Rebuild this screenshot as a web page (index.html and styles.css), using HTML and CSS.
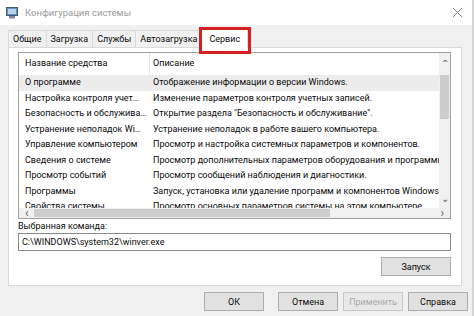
FILE: index.html
```html
<!DOCTYPE html>
<html lang="ru">
<head>
    <meta charset="UTF-8">
    <title>Конфигурация системы</title>
    <link rel="stylesheet" href="styles.css">
</head>
<body>
    <div class="window">
        <div class="titlebar">
            <svg class="appicon" width="12" height="12" viewBox="0 0 12 12">
                <rect x="0.5" y="0.5" width="11" height="8" fill="#6a8fb8" stroke="#3d5a80"/>
                <rect x="2" y="2" width="8" height="5" fill="#bcd3ec"/>
                <rect x="3" y="9" width="6" height="2.5" fill="#7d8794"/>
            </svg>
            <span class="title">Конфигурация системы</span>
            <svg class="close" width="11" height="11" viewBox="0 0 11 11">
                <path d="M1 1L10 10M10 1L1 10" stroke="#8a8a8a" stroke-width="1"/>
            </svg>
        </div>

        <div class="tabs">
            <div class="tab">Общие</div>
            <div class="tab">Загрузка</div>
            <div class="tab">Службы</div>
            <div class="tab">Автозагрузка</div>
            <div class="tab active">Сервис</div>
        </div>

        <div class="panel">
            <div class="listview">
                <div class="listbody">
                    <div class="lvrow header">
                        <div class="col1">Название средства</div>
                        <div class="col2">Описание</div>
                    </div>
                    <div class="lvrow selected">
                        <div class="col1">О программе</div>
                        <div class="col2">Отображение информации о версии Windows.</div>
                    </div>
                    <div class="lvrow">
                        <div class="col1">Настройка контроля учет…</div>
                        <div class="col2">Изменение параметров контроля учетных записей.</div>
                    </div>
                    <div class="lvrow">
                        <div class="col1">Безопасность и обслужива…</div>
                        <div class="col2">Открытие раздела "Безопасность и обслуживание".</div>
                    </div>
                    <div class="lvrow">
                        <div class="col1">Устранение неполадок Wi…</div>
                        <div class="col2">Устранение неполадок в работе вашего компьютера.</div>
                    </div>
                    <div class="lvrow">
                        <div class="col1">Управление компьютером</div>
                        <div class="col2">Просмотр и настройка системных параметров и компонентов.</div>
                    </div>
                    <div class="lvrow">
                        <div class="col1">Сведения о системе</div>
                        <div class="col2">Просмотр дополнительных параметров оборудования и программн</div>
                    </div>
                    <div class="lvrow">
                        <div class="col1">Просмотр событий</div>
                        <div class="col2">Просмотр сообщений наблюдения и диагностики.</div>
                    </div>
                    <div class="lvrow">
                        <div class="col1">Программы</div>
                        <div class="col2">Запуск, установка или удаление программ и компонентов Windows.</div>
                    </div>
                    <div class="lvrow">
                        <div class="col1">Свойства системы</div>
                        <div class="col2">Просмотр основных параметров системы на этом компьютере.</div>
                    </div>
                </div>
                <div class="vscroll">
                    <span class="arrow">&#8963;</span>
                    <div class="vthumb"></div>
                    <div class="vspace"></div>
                    <span class="arrow down">&#8964;</span>
                </div>
                <div class="hscroll">
                    <span class="harrow">&lsaquo;</span>
                    <div class="hthumb"></div>
                    <div class="hspace"></div>
                    <span class="harrow">&rsaquo;</span>
                </div>
            </div>

            <div class="label">Выбранная команда:</div>
            <div class="command">C:\WINDOWS\system32\winver.exe</div>
            <div class="runrow">
                <button class="btn">Запуск</button>
            </div>
        </div>

        <div class="footer">
            <button class="btn">ОК</button>
            <button class="btn">Отмена</button>
            <button class="btn disabled">Применить</button>
            <button class="btn">Справка</button>
        </div>
    </div>
</body>
</html>
```

FILE: styles.css
```css
* {
    margin: 0;
    padding: 0;
    box-sizing: border-box;
}

body {
    background-color: #ffffff;
    font-family: Roboto, 'Noto Sans', sans-serif;
    font-size: 9px;
    color: #0a0a0a;
}

.window {
    width: 474px;
    height: 316px;
    background-color: #f0f0f0;
    border-right: 2px solid #d4d4d4;
    overflow: hidden;
}

.titlebar {
    height: 25px;
    background-color: #ffffff;
    display: flex;
    align-items: center;
    padding: 0 9px 0 6px;
}

.appicon {
    margin-right: 7px;
}

.title {
    font-size: 9.5px;
    color: #9a9a9a;
    flex: 1;
}

.tabs {
    display: flex;
    padding-left: 8px;
    height: 22px;
    align-items: flex-end;
}

.tab {
    height: 17px;
    padding: 0 4px;
    line-height: 16px;
    border: 1px solid #dadada;
    border-right: none;
    border-bottom: none;
    background-color: #f0f0f0;
}

.tab.active {
    height: 20px;
    padding: 2px 7px 0 7px;
    background-color: #ffffff;
    border-right: 1px solid #dadada;
    position: relative;
    margin-bottom: -1px;
}

.tab.active::after {
    content: "";
    position: absolute;
    left: -3px;
    right: -4px;
    top: -2px;
    bottom: -6px;
    border: 3px solid #d42020;
}

.panel {
    margin: 0 10px 0 8px;
    height: 239px;
    background-color: #ffffff;
    border: 1px solid #dadada;
    padding: 4px 10px 0 9px;
}

.listview {
    height: 167px;
    border: 1px solid #a0a0a0;
    display: grid;
    grid-template-columns: 1fr 11px;
    grid-template-rows: 1fr 10px;
    overflow: hidden;
}

.listbody {
    overflow: hidden;
}

.lvrow {
    display: flex;
    height: 15.5px;
    line-height: 15.5px;
    white-space: nowrap;
}

.lvrow.header {
    height: 21px;
    line-height: 20px;
    margin-bottom: 1px;
}

.lvrow.header .col1 {
    border-right: 1px solid #e5e5e5;
}

.lvrow.selected {
    background-color: #ececec;
}

.col1 {
    width: 131px;
    padding-left: 6px;
    overflow: hidden;
    flex-shrink: 0;
}

.col2 {
    padding-left: 3px;
}

.vscroll {
    background-color: #f0f0f0;
    display: flex;
    flex-direction: column;
    align-items: center;
}

.arrow {
    height: 22px;
    padding-top: 6px;
    line-height: 10px;
    font-size: 10px;
    color: #606060;
}

.arrow.down {
    height: 12px;
    padding-top: 0;
    line-height: 6px;
}

.vthumb {
    width: 9px;
    height: 44px;
    background-color: #cdcdcd;
}

.vspace {
    flex: 1;
}

.hscroll {
    grid-column: 1 / 3;
    background-color: #f0f0f0;
    display: flex;
    align-items: center;
    padding: 0 6px;
}

.harrow {
    font-size: 12px;
    line-height: 10px;
    color: #606060;
}

.hthumb {
    width: 296px;
    height: 8px;
    margin-left: 5px;
    background-color: #cdcdcd;
}

.hspace {
    flex: 1;
}

.label {
    margin-top: 1px;
    line-height: 12px;
}

.command {
    margin-top: 1px;
    height: 18px;
    border: 1px solid #8a8a8a;
    padding-left: 3px;
    line-height: 16px;
}

.runrow {
    display: flex;
    justify-content: flex-end;
    margin-top: 6px;
}

.btn {
    font-family: inherit;
    font-size: 9px;
    color: #0a0a0a;
    width: 70px;
    height: 19px;
    background-color: #e1e1e1;
    border: 1px solid #adadad;
}

.btn.disabled {
    color: #a8a8a8;
    border-color: #c8c8c8;
    background-color: #e8e8e8;
}

.footer {
    display: flex;
    justify-content: flex-end;
    gap: 5px;
    padding: 6px 4px 0 0;
}

.footer .btn {
    width: 60px;
    height: 19px;
}

.footer .btn:first-child {
    margin-right: 9px;
}
```
